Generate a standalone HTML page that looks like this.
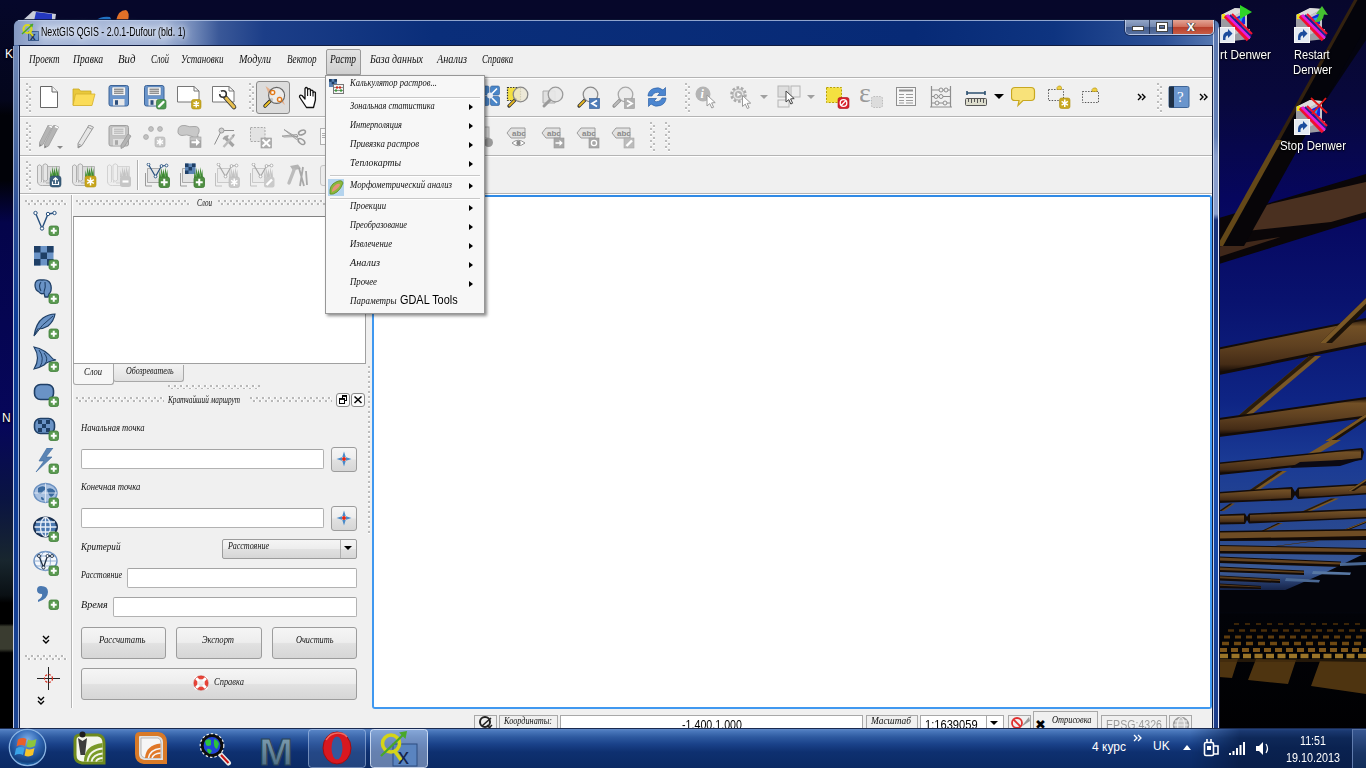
<!DOCTYPE html>
<html lang="ru"><head><meta charset="utf-8"><title>NextGIS QGIS</title>
<style>
html,body{margin:0;padding:0}
body{width:1366px;height:768px;overflow:hidden;position:relative;background:#05072a;font-family:"Liberation Sans",sans-serif;font-size:12px;color:#000}
.a{position:absolute}
.hw{font-family:"Liberation Serif",serif;font-style:italic;font-size:11px;color:#111;white-space:nowrap;position:absolute;line-height:14px}
.nar{font-family:"Liberation Sans",sans-serif;white-space:nowrap;position:absolute;transform-origin:0 50%}
.sep{position:absolute;left:20px;width:1192px;height:1px;background:#b4b4b4;border-bottom:1px solid #fff}
.grip{position:absolute;width:6px;background:linear-gradient(#bcbcbc 0,#bcbcbc 1.6px,#fff 1.6px,#fff 2.8px,transparent 2.8px) 0 0/2px 6px repeat-y,linear-gradient(#bcbcbc 0,#bcbcbc 1.6px,#fff 1.6px,#fff 2.8px,transparent 2.8px) 3px 3px/2px 6px repeat-y}
.gripx{position:absolute;height:6px;background:linear-gradient(90deg,#b8b8b8 0,#b8b8b8 1.6px,#fff 1.6px,#fff 2.8px,transparent 2.8px) 0 0/6px 2px repeat-x,linear-gradient(90deg,#b8b8b8 0,#b8b8b8 1.6px,#fff 1.6px,#fff 2.8px,transparent 2.8px) 3px 3px/6px 2px repeat-x}
.inp{position:absolute;background:#fff;border:1px solid #b2b2b2;border-top-color:#a4a4a4;border-radius:2px;box-sizing:border-box}
.btn{position:absolute;box-sizing:border-box;border:1px solid #9c9c9c;border-radius:3px;background:linear-gradient(#f5f5f5 0%,#ededed 48%,#e1e1e1 52%,#d6d6d6 100%)}
.sb{position:absolute;box-sizing:border-box;border:1px solid #a8a8a8;top:715px;height:16px;background:#f0f0f0}
.ic{position:absolute;width:24px;height:24px;overflow:visible}
.mi{position:absolute;left:350px}
.arr{position:absolute;left:469px;width:0;height:0;border-left:4px solid #000;border-top:3.5px solid transparent;border-bottom:3.5px solid transparent}
.msep{position:absolute;left:330px;width:150px;height:1px;background:#c8c8c8;border-bottom:1px solid #fff}
.dt{position:absolute;color:#fff;font-size:13px;text-align:center;text-shadow:0 1px 2px #000,0 0 2px #000;white-space:nowrap}
</style></head><body>

<svg class="a" style="left:0;top:0" width="1366" height="768" viewBox="0 0 1366 768"><defs><linearGradient id="sky" x1="0" y1="0" x2="0" y2="1"><stop offset="0" stop-color="#07072c"/><stop offset=".13" stop-color="#08083c"/><stop offset=".26" stop-color="#06065e"/><stop offset=".39" stop-color="#09126e"/><stop offset=".52" stop-color="#0e2484"/><stop offset=".6" stop-color="#1a3a94"/><stop offset=".7" stop-color="#2a4a90"/><stop offset=".745" stop-color="#3c5c98"/><stop offset=".775" stop-color="#0a1230"/><stop offset=".8" stop-color="#020308"/><stop offset="1" stop-color="#000"/></linearGradient><linearGradient id="lft" x1="0" y1="0" x2="0" y2="1"><stop offset="0" stop-color="#05072a"/><stop offset=".13" stop-color="#04061c"/><stop offset=".15" stop-color="#010208"/><stop offset=".235" stop-color="#010208"/><stop offset=".29" stop-color="#04044a"/><stop offset=".55" stop-color="#06065a"/><stop offset=".65" stop-color="#0a1442"/><stop offset=".73" stop-color="#18262e"/><stop offset=".775" stop-color="#0a1014"/><stop offset=".785" stop-color="#000"/><stop offset=".812" stop-color="#000"/><stop offset=".816" stop-color="#3a3c30"/><stop offset=".845" stop-color="#3a3c30"/><stop offset=".85" stop-color="#000"/><stop offset="1" stop-color="#000"/></linearGradient><linearGradient id="bm" x1="0" y1="0" x2="0" y2="1"><stop offset="0" stop-color="#2a1a0c"/><stop offset=".12" stop-color="#725026"/><stop offset=".5" stop-color="#5e4020"/><stop offset=".85" stop-color="#452c16"/><stop offset="1" stop-color="#160c06"/></linearGradient><linearGradient id="shd" x1="0" y1="0" x2="1" y2="1"><stop offset="0" stop-color="#02030a" stop-opacity="0"/><stop offset=".45" stop-color="#02030a" stop-opacity="0"/><stop offset=".62" stop-color="#02030a" stop-opacity=".95"/><stop offset="1" stop-color="#000"/></linearGradient></defs><rect x="0" y="0" width="20" height="768" fill="url(#lft)"/><rect x="20" y="0" width="1200" height="22" fill="#06072a"/><rect x="1210" y="0" width="156" height="768" fill="url(#sky)"/><path d="M1366 0 L1364 0 L1288 130 L1306 130 L1366 40z" fill="#04040e"/><path d="M1357 0 L1381 0 L1303 140 L1279 140z" fill="#04040b"/><path d="M1354 0 L1357.5 0 L1280 140 L1276 140z" fill="#33220f"/><path d="M1219 218 L1366 174 L1366 218 L1219 264z" fill="#0a0608"/><path d="M1237.5 232 L1253 208 L1366 182 L1366 212 L1331 222z" fill="#4a3020"/><path d="M1219 246.5 L1280.5 237 L1219 257z" fill="#40281a"/><path d="M1281 140 L1303 140 L1244 246 L1222 246z" fill="#070508"/><path d="M1276 140 L1282 140 L1223 246 L1217 246z" fill="#644818"/><path d="M1219 347.5 L1366 318 L1366 345 L1219 375z" fill="#140c08"/><path d="M1219 349.5 L1366 320 L1366 342 L1219 372z" fill="url(#bm)"/><path d="M1366 298 L1378 298 L1332 343 L1320 343z" fill="#1c1208"/><path d="M1366 298 L1372 298 L1326 343 L1320 343z" fill="#7a5826"/><path d="M1309 356 L1321 356 L1237 427 L1225 427z" fill="#7a5826"/><path d="M1309 356 L1315 356 L1231 427 L1225 427z" fill="#2a1c0c"/><path d="M1219 418 L1366 397 L1366 418 L1219 437z" fill="#140c08"/><path d="M1219 420 L1366 399 L1366 415.5 L1219 434.5z" fill="url(#bm)"/><path d="M1366 414 L1376 414 L1335 441 L1325 441z" fill="#1c1208"/><path d="M1366 414 L1371 414 L1330 441 L1325 441z" fill="#7a5826"/><path d="M1331 440 L1341 440 L1304 462 L1294 462z" fill="#7a5826"/><path d="M1219 462.5 L1362 448 L1364 452 L1362 460 L1219 475z" fill="#140c08"/><path d="M1219 464 L1361 449.5 L1361 458 L1219 473z" fill="url(#bm)"/><path d="M1300 462 L1362 459 L1340 466 L1290 468z" fill="#0c0a14"/><path d="M1278 471 L1287 471 L1247 498 L1238 498z" fill="#7a5826"/><path d="M1278 471 L1282.5 471 L1242.5 498 L1238 498z" fill="#2a1c0c"/><path d="M1219 492 L1292 487 L1295 492 L1298 487.5 L1366 483.5 L1366 494.5 L1298 499 L1295 495 L1292 500 L1219 503z" fill="#140c08"/><path d="M1219 493.5 L1291 488.5 L1291 498 L1219 501.5z" fill="url(#bm)"/><path d="M1299 489 L1366 485 L1366 493 L1299 497.5z" fill="url(#bm)"/><path d="M1366 479 L1372 479 L1354 491 L1348 491z" fill="#1c1208"/><path d="M1366 479 L1369 479 L1351 491 L1348 491z" fill="#7a5826"/><path d="M1331 498.5 L1339 498.5 L1298 517 L1290 517z" fill="#7a5826"/><path d="M1331 498.5 L1335 498.5 L1294 517 L1290 517z" fill="#2a1c0c"/><path d="M1230 503.5 L1235 503.5 L1224 511 L1219 511z" fill="#6a4a22"/><path d="M1230 503.5 L1232.5 503.5 L1221.5 511 L1219 511z" fill="#1c1208"/><path d="M1219 514.5 L1245 513.5 L1247 517 L1249 513.5 L1366 508.5 L1366 518.5 L1249 523.5 L1247 520 L1245 524 L1219 524.5z" fill="#140c08"/><path d="M1219 516 L1244 515 L1244 522.5 L1219 523z" fill="url(#bm)"/><path d="M1250 515 L1366 510 L1366 517 L1250 522z" fill="url(#bm)"/><path d="M1278 523 L1283 523 L1256 536 L1251 536z" fill="#6a4a22"/><path d="M1278 523 L1280.5 523 L1253.5 536 L1251 536z" fill="#1c1208"/><path d="M1366 521 L1371 521 L1336 535 L1331 535z" fill="#1c1208"/><path d="M1366 521 L1368.5 521 L1333.5 535 L1331 535z" fill="#7a5826"/><path d="M1219 531 L1366 529 L1366 540 L1219 541z" fill="#120a06"/><path d="M1219 532.5 L1366 530.5 L1366 536 L1219 538.5z" fill="#6e4c24"/><path d="M1317 540.5 L1321 540.5 L1226 553 L1222 553z" fill="#5e4220"/><path d="M1317 540.5 L1319 540.5 L1224 553 L1222 553z" fill="#1c1208"/><path d="M1219 545 L1366 548 L1366 555 L1219 553.5z" fill="#120a06"/><path d="M1219 546 L1366 549 L1366 552 L1219 551z" fill="#6a4822"/><path d="M1219 556.5 L1341 561.5 L1341 567 L1219 563z" fill="#120a06"/><path d="M1219 557.5 L1341 562.5 L1341 564.5 L1219 560.5z" fill="#644420"/><path d="M1219 566.5 L1304 570.5 L1304 575 L1219 572z" fill="#120a06"/><path d="M1219 567.5 L1304 571.5 L1304 573 L1219 570z" fill="#5e401e"/><path d="M1219 575.5 L1280 579 L1280 583 L1219 580.5z" fill="#120a06"/><path d="M1219 576.3 L1280 579.8 L1280 581 L1219 578.3z" fill="#583c1c"/><path d="M1219 583.5 L1261 586 L1261 589 L1219 588z" fill="#120a06"/><path d="M1219 584.2 L1261 586.7 L1261 587.6 L1219 585.8z" fill="#50361a"/><path d="M1366 553 L1366 600 L1262 600 L1290 588 L1320 575z" fill="#04050c"/><path d="M1219 590 L1366 590 L1366 612 L1219 612z" fill="#03040a"/><path d="M1313 571 L1351 572.5 L1350 575 L1312 574z" fill="#5878a4"/><path d="M1286 578 L1320 580 L1319 582.5 L1285 581z" fill="#4a6894"/><path d="M1340 563 L1366 562 L1366 565 L1340 566z" fill="#4a6894"/><path d="M1234 624 H1366" stroke="#3a2408" stroke-width="2" stroke-dasharray="5 6"/><path d="M1228 630.5 H1366" stroke="#4a2e0a" stroke-width="2.5" stroke-dasharray="6 5"/><path d="M1224 637 H1366" stroke="#5e3c0e" stroke-width="3" stroke-dasharray="6 5"/><path d="M1222 643.5 H1366" stroke="#6e4812" stroke-width="3.5" stroke-dasharray="7 5"/><path d="M1220 650 H1366" stroke="#7e561a" stroke-width="4" stroke-dasharray="7 4"/><path d="M1220 656 H1366" stroke="#9a7428" stroke-width="4.5" stroke-dasharray="8 3.5"/><path d="M1219 659 L1238 659 L1232 678 L1219 677z M1256 659 L1296 660 L1288 684 L1248 680z M1320 661 L1366 662 L1366 694 L1311 686z" fill="#4e3410"/><path d="M1219 659 H1366 V662 H1219z" fill="#3a260c" opacity=".6"/><path d="M22 21 L33 11 L56 14 L55 21z" fill="#c8ccd8"/><path d="M36 12 L52 14 L52 21 L34 21z" fill="#2438c0"/><path d="M96 21 Q100 16 110 17 L112 21z" fill="#2070c0"/><path d="M116 21 Q118 10 126 10 Q130 12 128 21z" fill="#e07028"/></svg>
<div class="nar" style="left:1220px;top:48px;font-size:12.5px;line-height:14.5px;color:#fff;transform:scaleX(0.941);text-shadow:0 1px 2px #000,0 0 2px #000">rt Denwer</div>
<div class="nar" style="left:1294.4px;top:48px;font-size:12.5px;line-height:14.5px;color:#fff;transform:scaleX(0.886);text-shadow:0 1px 2px #000,0 0 2px #000">Restart</div>
<div class="nar" style="left:1292.5px;top:63px;font-size:12.5px;line-height:14.5px;color:#fff;transform:scaleX(0.905);text-shadow:0 1px 2px #000,0 0 2px #000">Denwer</div>
<div class="nar" style="left:1279.5px;top:139px;font-size:12.5px;line-height:14.5px;color:#fff;transform:scaleX(0.913);text-shadow:0 1px 2px #000,0 0 2px #000">Stop Denwer</div>
<div class="dt" style="left:5px;top:47px;font-size:12px">K</div>
<div class="dt" style="left:2px;top:411px;font-size:12px">N</div>
<svg class="a" style="left:1219px;top:5px" width="38" height="40" viewBox="0 0 38 40"><path d="M2 10 L16 3 L28 4 L28 24 L31 24 L31 34 L14 36 L2 30z" fill="#9c9ca2"/><path d="M2 10 L16 3 L28 4 L15 11z" fill="#dcdcdc"/><path d="M15 11 L28 4 V24 L15 30z" fill="#c4c4c8"/><path d="M16 13 L26 8 V19 L16 24z" fill="#1428e0"/><path d="M18 14 l6 -2 l-2 6z" fill="#20a0f0"/><path d="M3 9 h3 v5 h-3z" fill="#f0e020"/><path d="M6 11 L29 35" stroke="#f01030" stroke-width="3.500"/><path d="M8 10 L31 33" stroke="#e020e0" stroke-width="3"/><path d="M11 10 L32 31" stroke="#1c1c90" stroke-width="1.800"/><path d="M13 9 L33 29" stroke="#f01030" stroke-width="2.200"/><rect x="0.500" y="22.500" width="15" height="15" fill="#e4eaf2" stroke="#f8f8f8" stroke-width="1"/><path d="M4 35 Q3 27 9 26.500 V24 L13.500 28.500 L9 33 V30.500 Q6 30.500 6.500 35z" fill="#1c4c9c"/><path d="M21 0 L33 7 L21 14z" fill="#30d428"/></svg>
<svg class="a" style="left:1294px;top:5px" width="38" height="40" viewBox="0 0 38 40"><path d="M2 10 L16 3 L28 4 L28 24 L31 24 L31 34 L14 36 L2 30z" fill="#9c9ca2"/><path d="M2 10 L16 3 L28 4 L15 11z" fill="#dcdcdc"/><path d="M15 11 L28 4 V24 L15 30z" fill="#c4c4c8"/><path d="M16 13 L26 8 V19 L16 24z" fill="#1428e0"/><path d="M18 14 l6 -2 l-2 6z" fill="#20a0f0"/><path d="M3 9 h3 v5 h-3z" fill="#f0e020"/><path d="M6 11 L29 35" stroke="#f01030" stroke-width="3.500"/><path d="M8 10 L31 33" stroke="#e020e0" stroke-width="3"/><path d="M11 10 L32 31" stroke="#1c1c90" stroke-width="1.800"/><path d="M13 9 L33 29" stroke="#f01030" stroke-width="2.200"/><rect x="0.500" y="22.500" width="15" height="15" fill="#e4eaf2" stroke="#f8f8f8" stroke-width="1"/><path d="M4 35 Q3 27 9 26.500 V24 L13.500 28.500 L9 33 V30.500 Q6 30.500 6.500 35z" fill="#1c4c9c"/><path d="M20 17 Q24 14 25 9 L22 9 L28 1 L34 10 L30 9.500 Q29 18 20 17z" fill="#44c030"/></svg>
<svg class="a" style="left:1294px;top:97px" width="38" height="40" viewBox="0 0 38 40"><path d="M2 10 L16 3 L28 4 L28 24 L31 24 L31 34 L14 36 L2 30z" fill="#9c9ca2"/><path d="M2 10 L16 3 L28 4 L15 11z" fill="#dcdcdc"/><path d="M15 11 L28 4 V24 L15 30z" fill="#c4c4c8"/><path d="M16 13 L26 8 V19 L16 24z" fill="#1428e0"/><path d="M18 14 l6 -2 l-2 6z" fill="#20a0f0"/><path d="M3 9 h3 v5 h-3z" fill="#f0e020"/><path d="M6 11 L29 35" stroke="#f01030" stroke-width="3.500"/><path d="M8 10 L31 33" stroke="#e020e0" stroke-width="3"/><path d="M11 10 L32 31" stroke="#1c1c90" stroke-width="1.800"/><path d="M13 9 L33 29" stroke="#f01030" stroke-width="2.200"/><rect x="0.500" y="22.500" width="15" height="15" fill="#e4eaf2" stroke="#f8f8f8" stroke-width="1"/><path d="M4 35 Q3 27 9 26.500 V24 L13.500 28.500 L9 33 V30.500 Q6 30.500 6.500 35z" fill="#1c4c9c"/><path d="M17 1 L33 16 M32 1 L18 17" stroke="#e01818" stroke-width="1.800"/></svg>
<div class="a" id="win" style="left:14px;top:20px;width:1205px;height:720px;border-radius:7px 7px 0 0;background:linear-gradient(90deg,#4f6da6 0,#4f6da6 4px,#1a3a80 5px,#0a2e7a 40%,#072a76 100%);box-shadow:0 0 0 1px rgba(10,20,50,.8)"></div>
<div class="a" style="left:14px;top:20px;width:1205px;height:25px;border-radius:6px 6px 0 0;background:linear-gradient(90deg,#8498c2 0px,#a9b9d9 30px,#a3b4d6 150px,#7088b8 180px,#3a5898 205px,#1c3e88 250px,#0a2e7a 420px,#072a76 900px,#0e3480 1040px,#2c5096 1150px,#5a7cb4 1205px)"></div>
<div class="a" style="left:18px;top:20px;width:1196px;height:1px;background:rgba(190,205,235,.75)"></div>
<div class="a" style="left:13px;top:46px;width:1px;height:682px;background:linear-gradient(#8ea0c4 0,#b8c4e0 250px,#c8d0e8 682px)"></div>
<div class="a" style="left:14px;top:46px;width:4px;height:682px;background:linear-gradient(#6f88b8 0,#5572a4 70px,#2a4c96 170px,#0c3c98 280px,#103c94 500px,#1c4490 682px)"></div>
<div class="a" style="left:18px;top:46px;width:1px;height:682px;background:#9db0d6"></div>
<div class="a" style="left:19px;top:45px;width:1194px;height:700px;background:#101c40"></div>
<div class="a" style="left:1212px;top:46px;width:8px;height:682px;background:linear-gradient(90deg,#101c3c 0,#101c3c 1px,#c8d4ec 1px,#c8d4ec 2px,rgba(0,0,0,0) 2px,rgba(0,0,0,0) 6px,#e4e9f6 6px,#e4e9f6 7px,#0a1030 7px),linear-gradient(#5c78b0 0,#6480b6 90px,#8a9ecb 110px,#8a9ecb 168px,#16307a 174px,#123484 260px,#1448a8 380px,#1448a8 500px,#1c3c88 682px)"></div>
<div class="a" style="left:1213px;top:24px;width:6px;height:22px;border-radius:0 6px 0 0;background:linear-gradient(90deg,#c8d4ec 0,#c8d4ec 1px,#5c78b0 1px,#5c78b0 5px,#e4e9f6 5px)"></div>
<svg class="a" style="left:21px;top:22px" width="20" height="20" viewBox="0 0 20 20"><rect x="7.500" y="9.500" width="10" height="9" fill="#6d93c6" stroke="#3a5a8c"/><text x="9" y="17.500" font-family="Liberation Sans,sans-serif" font-weight="bold" font-size="10" fill="#1a2a4a">x</text><circle cx="6.500" cy="7" r="4" fill="none" stroke="#d8d820" stroke-width="2.200"/><path d="M8 9 L12 14" stroke="#d8d820" stroke-width="2"/><path d="M1 12 L12 2" stroke="#48a828" stroke-width="1.400"/><path d="M12 2 l-3.500 .5 l3 3z" fill="#48a828"/></svg>
<div class="nar" style="left:41px;top:24px;font-size:13px;line-height:15px;color:#000;transform:scaleX(0.678);text-shadow:0 0 6px #fff,0 0 10px #fff,0 0 14px #dfe8ff">NextGIS QGIS - 2.0.1-Dufour (bld. 1)</div>
<div class="a" style="left:1125px;top:20px;width:89px;height:15px;border:1px solid rgba(230,238,255,.75);border-top:none;border-radius:0 0 5px 5px;box-sizing:border-box;overflow:hidden;box-shadow:0 0 0 1px rgba(20,30,60,.6)"><div class="a" style="left:0;top:0;width:23px;height:15px;background:linear-gradient(#93a5c6 0,#7388b0 45%,#475f8e 50%,#5a73a3 100%);border-right:1px solid rgba(20,30,60,.7)"></div><div class="a" style="left:24px;top:0;width:22px;height:15px;background:linear-gradient(#93a5c6 0,#7388b0 45%,#475f8e 50%,#5a73a3 100%);border-right:1px solid rgba(20,30,60,.7)"></div><div class="a" style="left:47px;top:0;width:42px;height:15px;background:linear-gradient(#e3a596 0,#d0705c 45%,#b8402c 50%,#c86048 100%)"></div><div class="a" style="left:7px;top:7px;width:10px;height:3px;background:#fff;box-shadow:0 0 0 1px #444"></div><div class="a" style="left:31px;top:3px;width:6px;height:4px;border:2px solid #fff;box-shadow:0 0 0 1px #444, inset 0 0 0 1px #444"></div><div class="a" style="left:61px;top:-1px;width:14px;font:bold 14px/15px 'Liberation Sans',sans-serif;color:#fff;text-shadow:0 0 1px #333,1px 0 0 #555,-1px 0 0 #555">x</div></div>
<div class="a" id="client" style="left:20px;top:46px;width:1192px;height:690px;background:#f0f0f0"></div>
<div class="a" style="left:326px;top:49px;width:35px;height:26px;box-sizing:border-box;border:1px solid #9a9a9a;border-radius:2px 2px 0 0;background:linear-gradient(#e4e4e4,#cfcfcf)"></div>
<div class="hw" style="left:29px;top:52px;font-size:12px;color:#111;transform-origin:0 50%;transform:scaleX(0.760);">Проект</div>
<div class="hw" style="left:73px;top:52px;font-size:12px;color:#111;transform-origin:0 50%;transform:scaleX(0.807);">Правка</div>
<div class="hw" style="left:118px;top:52px;font-size:12px;color:#111;transform-origin:0 50%;transform:scaleX(0.902);">Вид</div>
<div class="hw" style="left:150.5px;top:52px;font-size:12px;color:#111;transform-origin:0 50%;transform:scaleX(0.709);">Слой</div>
<div class="hw" style="left:181px;top:52px;font-size:12px;color:#111;transform-origin:0 50%;transform:scaleX(0.753);">Установки</div>
<div class="hw" style="left:238.5px;top:52px;font-size:12px;color:#111;transform-origin:0 50%;transform:scaleX(0.846);">Модули</div>
<div class="hw" style="left:286.5px;top:52px;font-size:12px;color:#111;transform-origin:0 50%;transform:scaleX(0.761);">Вектор</div>
<div class="hw" style="left:329.5px;top:52px;font-size:12px;color:#111;transform-origin:0 50%;transform:scaleX(0.791);">Растр</div>
<div class="hw" style="left:370px;top:52px;font-size:12px;color:#111;transform-origin:0 50%;transform:scaleX(0.826);">База данных</div>
<div class="hw" style="left:437px;top:52px;font-size:12px;color:#111;transform-origin:0 50%;transform:scaleX(0.852);">Анализ</div>
<div class="hw" style="left:482px;top:52px;font-size:12px;color:#111;transform-origin:0 50%;transform:scaleX(0.729);">Справка</div>
<div class="sep" style="top:77px"></div>
<div class="sep" style="top:116px"></div>
<div class="sep" style="top:155px"></div>
<div class="sep" style="top:193px"></div>
<div class="grip" style="left:26px;top:83px;height:30px"></div>
<div class="grip" style="left:249px;top:83px;height:30px"></div>
<div class="grip" style="left:685px;top:83px;height:30px"></div>
<div class="grip" style="left:1157px;top:83px;height:30px"></div>
<div class="grip" style="left:26px;top:122px;height:30px"></div>
<div class="grip" style="left:650px;top:122px;height:30px"></div>
<div class="grip" style="left:665px;top:122px;height:30px"></div>
<div class="grip" style="left:26px;top:161px;height:30px"></div>
<div class="a" style="left:256px;top:81px;width:34px;height:33px;box-sizing:border-box;border:1px solid #8a8a8a;border-radius:3px;background:#dcdcdc"></div>
<svg class="a" style="left:37px;top:85px" width="26" height="26" viewBox="0 0 26 26"><path d="M3.5 1.5 H15 L20.5 7 V22.5 H3.5z" fill="#fff" stroke="#666" stroke-width="1"/><path d="M15 1.5 V7 H20.5" fill="#f4f4f4" stroke="#666" stroke-width="1"/></svg>
<svg class="a" style="left:72px;top:85px" width="26" height="26" viewBox="0 0 26 26"><path d="M1 4 H7 L8.5 6 H19 V20 H1z" fill="#e9c83c" stroke="#c9a822" stroke-width=".8"/><path d="M3.5 9 H23 L20 20.5 H1z" fill="#fbdc58" stroke="#d4b02c" stroke-width=".8"/></svg>
<svg class="a" style="left:107px;top:85px" width="26" height="26" viewBox="0 0 26 26"><rect x="2" y="0.5" width="19.5" height="20.5" rx="2" fill="#6a95cc" stroke="#3e6496" stroke-width="1"/><rect x="5" y="2" width="13.5" height="8.5" rx="1" fill="#f4f4f4" stroke="#3e6496" stroke-width=".4"/><path d="M7 4.2 h9.5 M7 6.2 h9.5 M7 8.2 h9.5" stroke="#555" stroke-width=".9"/><rect x="6" y="14" width="11.5" height="6.5" fill="#e8e8e8"/><rect x="8" y="15.2" width="3" height="4.6" fill="#2d4f7c"/></svg>
<svg class="a" style="left:142px;top:85px" width="26" height="26" viewBox="0 0 26 26"><g transform="translate(.5 0)"><rect x="2" y="0.5" width="19.5" height="20.5" rx="2" fill="#6a95cc" stroke="#3e6496" stroke-width="1"/><rect x="5" y="2" width="13.5" height="8.5" rx="1" fill="#f4f4f4" stroke="#3e6496" stroke-width=".4"/><path d="M7 4.2 h9.5 M7 6.2 h9.5 M7 8.2 h9.5" stroke="#555" stroke-width=".9"/><rect x="6" y="14" width="11.5" height="6.5" fill="#e8e8e8"/><rect x="8" y="15.2" width="3" height="4.6" fill="#2d4f7c"/></g><rect x="14.5" y="14.5" width="9.5" height="9.5" rx="2" fill="#4e9a50" stroke="#3a7a3c" stroke-width=".7"/><path d="M17 21.5 L21.5 17" stroke="#fff" stroke-width="2.4" stroke-linecap="round"/></svg>
<svg class="a" style="left:177px;top:85px" width="26" height="26" viewBox="0 0 26 26"><path d="M0.5 1.5 H17 L22 6 V17 H0.5z" fill="#fff" stroke="#777" stroke-width="1"/><path d="M17 1.5 V6 H22" fill="none" stroke="#777" stroke-width="1"/><rect x="14.5" y="14.5" width="9.5" height="9.5" rx="2" fill="#c8a820" stroke="#b09010" stroke-width=".6"/><path d="M19.25 16.1 v6.3 M16.5095 17.675 l5.481 3.15 M16.5095 20.825 l5.481 -3.15" stroke="#fff" stroke-width="1.5"/></svg>
<svg class="a" style="left:212px;top:85px" width="26" height="26" viewBox="0 0 26 26"><path d="M0.5 1.5 H17 L22 6 V17 H0.5z" fill="#fff" stroke="#777" stroke-width="1"/><path d="M17 1.5 V6 H22" fill="none" stroke="#777" stroke-width="1"/><path d="M13 12 L22 22" stroke="#333" stroke-width="4.6" stroke-linecap="round"/><path d="M14 13 L22 22" stroke="#e8c050" stroke-width="3" stroke-linecap="round"/><circle cx="11" cy="9" r="3.3" fill="#fff" stroke="#333" stroke-width="1.6"/><path d="M8 5 L11 9 L6.5 9z" fill="#fff"/></svg>
<svg class="a" style="left:261px;top:85px" width="26" height="26" viewBox="0 0 26 26"><path d="M4.5 1 L14 8 L9 12z" fill="#e8a070" opacity=".75"/><path d="M24 20 L15 13 L19.5 9.5z" fill="#e8a070" opacity=".75"/><path d="M10.5 14.5 L4 21" stroke="#222" stroke-width="3.4" stroke-linecap="round"/><path d="M8.6 16.6 L4.2 21" stroke="#f0c428" stroke-width="2" stroke-linecap="round"/><circle cx="15.6" cy="10.4" r="8" fill="rgba(240,240,240,.8)" stroke="#666" stroke-width="1.1"/><circle cx="11.6" cy="7.5" r="2.8" fill="#e07818"/><rect x="10.4" y="6.3" width="2.4" height="2.4" fill="#fff"/><circle cx="18.6" cy="14.5" r="2.8" fill="#e07818"/><rect x="17.4" y="13.3" width="2.4" height="2.4" fill="#fff"/></svg>
<svg class="a" style="left:296px;top:85px" width="26" height="26" viewBox="0 0 26 26"><path d="M9 12 V3.5 q1.3 -2 2.6 0 V4.5 q1.4 -1.8 2.8 0 V6 q1.3 -1.6 2.6 0 V7.5 q1.2 -1.4 2.4 0 V15 L17.5 22.5 H10.5 L3.5 12 q0 -2.5 2.5 -1.5 L9 14z" fill="#fff" stroke="#111" stroke-width="1.3" stroke-linejoin="round"/><path d="M11.6 4.5 V11 M14.4 6 V11 M17 7.5 V11.5" stroke="#111" stroke-width="1.1"/></svg>
<svg class="a" style="left:478px;top:85px" width="26" height="26" viewBox="0 0 26 26"><g fill="#4a86c8" stroke="#2d5a96" stroke-width=".6"><rect x="2" y="1" width="9" height="9" rx="1.500"/><rect x="12.500" y="1" width="9" height="9" rx="1.500"/><rect x="2" y="11.500" width="9" height="9" rx="1.500"/><rect x="12.500" y="11.500" width="9" height="9" rx="1.500"/></g><path d="M14 8.500 l5 -5 M14 13 l5 5" stroke="#fff" stroke-width="1.600"/><circle cx="12" cy="10.500" r="3" fill="#e8eef8"/></svg>
<svg class="a" style="left:506px;top:85px" width="26" height="26" viewBox="0 0 26 26"><rect x="1.5" y="2.5" width="13" height="13" fill="#f4e040" stroke="#333" stroke-dasharray="1.5 1.2" stroke-width="1.2"/><path d="M9.5 14.5 L3 21" stroke="#333" stroke-width="3.2" stroke-linecap="round"/><path d="M8 16 L3.4 20.6" stroke="#e8b820" stroke-width="1.8" stroke-linecap="round"/><circle cx="14.5" cy="9.5" r="7.3" fill="rgba(236,232,212,.85)" stroke="#888" stroke-width="1.3"/></svg>
<svg class="a" style="left:541px;top:85px" width="26" height="26" viewBox="0 0 26 26"><path d="M2 6 h12 v12 h-12z" fill="#e0e0e0" stroke="#aaa"/><path d="M9.5 14.5 L3 21" stroke="#9a9a9a" stroke-width="3" stroke-linecap="round"/><circle cx="14.5" cy="9.5" r="7.3" fill="rgba(232,232,232,.9)" stroke="#9a9a9a" stroke-width="1.3"/></svg>
<svg class="a" style="left:576px;top:85px" width="26" height="26" viewBox="0 0 26 26"><path d="M9.5 14.5 L3 21" stroke="#333" stroke-width="3.2" stroke-linecap="round"/><path d="M8 16 L3.4 20.6" stroke="#e8b820" stroke-width="1.8" stroke-linecap="round"/><circle cx="14.5" cy="9.5" r="7.3" fill="#ececec" stroke="#8c8c8c" stroke-width="1.3"/><rect x="13.5" y="13.5" width="10" height="10" fill="#4e7cb8" stroke="#2c5690" stroke-width=".6"/><path d="M21 15.5 L16 18.5 L21 21.5" fill="none" stroke="#fff" stroke-width="1.8"/></svg>
<svg class="a" style="left:611px;top:85px" width="26" height="26" viewBox="0 0 26 26"><path d="M9.5 14.5 L3 21" stroke="#8c8c8c" stroke-width="3.2" stroke-linecap="round"/><path d="M8 16 L3.4 20.6" stroke="#bdbdbd" stroke-width="1.8" stroke-linecap="round"/><circle cx="14.5" cy="9.5" r="7.3" fill="#ececec" stroke="#a8a8a8" stroke-width="1.3"/><rect x="13.5" y="13.5" width="10" height="10" fill="#b0b0b0" stroke="#999" stroke-width=".6"/><path d="M16 15.5 L21 18.5 L16 21.5" fill="none" stroke="#fff" stroke-width="1.8"/></svg>
<svg class="a" style="left:645px;top:85px" width="26" height="26" viewBox="0 0 26 26"><path d="M3 11 A9 8.5 0 0 1 18 5 L20.5 2.5 V10.5 H12.5 L15 8 A5.5 5 0 0 0 7 11z" fill="#4c86d0" stroke="#2c62a8" stroke-width=".7"/><path d="M21 13 A9 8.5 0 0 1 6 19 L3.5 21.5 V13.5 H11.5 L9 16 A5.5 5 0 0 0 17 13z" fill="#4c86d0" stroke="#2c62a8" stroke-width=".7"/></svg>
<svg class="a" style="left:694px;top:85px" width="26" height="26" viewBox="0 0 26 26"><circle cx="9" cy="9" r="7.5" fill="#b4b4b4"/><text x="6.6" y="13.4" font-family="Liberation Serif,serif" font-style="italic" font-weight="bold" font-size="12" fill="#fff">i</text><path transform="translate(13 10)" d="M0 0 L0 11 L2.8 8.6 L4.8 13 L6.6 12.2 L4.6 7.9 L8.2 7.6z" fill="#fff" stroke="#9a9a9a" stroke-width="1"/></svg>
<svg class="a" style="left:729px;top:85px" width="26" height="26" viewBox="0 0 26 26"><circle cx="9.5" cy="9.5" r="7" fill="none" stroke="#aaa" stroke-width="2.6" stroke-dasharray="2.6 1.8"/><circle cx="9.5" cy="9.5" r="5.6" fill="#e6e6e6" stroke="#aaa" stroke-width="1"/><circle cx="9.5" cy="9.5" r="3.6" fill="#b4b4b4"/><path d="M8.3 7.5 L11.8 9.5 L8.3 11.5z" fill="#fff"/><path transform="translate(13.5 10.5)" d="M0 0 L0 11 L2.8 8.6 L4.8 13 L6.6 12.2 L4.6 7.9 L8.2 7.6z" fill="#fff" stroke="#9a9a9a" stroke-width="1"/></svg>
<svg class="a" style="left:777px;top:85px" width="26" height="26" viewBox="0 0 26 26"><rect x="1" y="1" width="11" height="11" fill="#dedede" stroke="#b4b4b4"/><rect x="14" y="1" width="9" height="11" fill="#ededed" stroke="#b4b4b4"/><rect x="1" y="15" width="11" height="7" fill="#ededed" stroke="#b4b4b4"/><path transform="translate(9 6)" d="M0 0 L0 11 L2.8 8.6 L4.8 13 L6.6 12.2 L4.6 7.9 L8.2 7.6z" fill="#fff" stroke="#444" stroke-width="1"/></svg>
<svg class="a" style="left:825px;top:85px" width="26" height="26" viewBox="0 0 26 26"><rect x="1.5" y="2.5" width="15" height="15" fill="#f4e040" stroke="#b8a000" stroke-dasharray="2 1.4" stroke-width="1"/><rect x="13" y="12.5" width="11" height="11" rx="2" fill="#d8202c" stroke="#a8101c" stroke-width=".6"/><circle cx="18.5" cy="18" r="3.3" fill="none" stroke="#fff" stroke-width="1.3"/><path d="M16.3 20.2 L20.7 15.8" stroke="#fff" stroke-width="1.3"/></svg>
<svg class="a" style="left:860px;top:85px" width="26" height="26" viewBox="0 0 26 26"><text x="-1" y="17" font-family="Liberation Serif,serif" font-size="28" fill="#9a9a9a">ε</text><rect x="11.500" y="11.500" width="11" height="11" rx="2" fill="#dcdcdc" stroke="#bcbcbc" stroke-dasharray="1.6 1.2"/></svg>
<svg class="a" style="left:894px;top:85px" width="26" height="26" viewBox="0 0 26 26"><rect x="2.500" y="2.500" width="19" height="18" fill="#f6f6f6" stroke="#8e8e8e"/><path d="M5 5.500 h14" stroke="#8e8e8e" stroke-width="2"/><path d="M5 9.5 h5 M12 9.500 h7 M5 12.500 h5 M12 12.500 h7 M5 15.500 h5 M12 15.500 h7 M5 18 h5 M12 18 h7" stroke="#9a9a9a" stroke-width="1.2"/></svg>
<svg class="a" style="left:929px;top:85px" width="26" height="26" viewBox="0 0 26 26"><path d="M2.500 1 V22 M21.500 1 V22 M1 22 H23" stroke="#8e8e8e" stroke-width="1.2" fill="none"/><path d="M2.5 5 H21.5 M2.5 11.500 H21.5 M2.5 18 H21.5" stroke="#8e8e8e" stroke-width="1"/><g fill="#f0f0f0" stroke="#8e8e8e" stroke-width="1"><circle cx="12" cy="5" r="2"/><circle cx="17" cy="5" r="2"/><circle cx="7" cy="11.5" r="2"/><circle cx="12" cy="11.5" r="2"/><circle cx="8" cy="18" r="2"/><circle cx="16" cy="18" r="2"/></g></svg>
<svg class="a" style="left:964px;top:85px" width="26" height="26" viewBox="0 0 26 26"><path d="M3 6 V10 M21 6 V10 M3 8 H21" stroke="#2c5070" stroke-width="1.6" fill="none"/><rect x="1.500" y="13.500" width="21" height="7" rx="1" fill="#dcdccc" stroke="#555"/><path d="M4.500 14 v3 M7.500 14 v4 M10.500 14 v3 M13.500 14 v4 M16.500 14 v3 M19.500 14 v4" stroke="#555" stroke-width="1"/></svg>
<svg class="a" style="left:1011px;top:85px" width="26" height="26" viewBox="0 0 26 26"><path d="M4 2.500 H20 Q23.5 2.500 23.5 6 V12 Q23.500 15.500 20 15.500 H12 L7 20.500 L8 15.500 H4 Q0.500 15.500 0.500 12 V6 Q0.500 2.500 4 2.500z" fill="#f8e27a" stroke="#c8a820" stroke-width="1.2"/></svg>
<svg class="a" style="left:1047px;top:85px" width="26" height="26" viewBox="0 0 26 26"><rect x="1.500" y="4.500" width="15" height="11" fill="none" stroke="#555" stroke-dasharray="1.400 1.400"/><path d="M10 4.5 v-2 l1.5 -1.500 h2 l1 1.5 v2z" fill="#f0d040" stroke="#b89818" stroke-width=".7"/><rect x="12.5" y="13" width="10.5" height="10.5" rx="2" fill="#c8a820" stroke="#b09010" stroke-width=".6"/><path d="M17.75 14.6 v7.3 M14.5745 16.425 l6.351 3.65 M14.5745 20.075 l6.351 -3.65" stroke="#fff" stroke-width="1.5"/></svg>
<svg class="a" style="left:1080px;top:85px" width="26" height="26" viewBox="0 0 26 26"><rect x="2.500" y="6.500" width="16" height="11" fill="none" stroke="#555" stroke-dasharray="1.400 1.400"/><path d="M12 6.5 v-2 l1.500 -1.5 h2.500 l1 1.5 v2z" fill="#f0d040" stroke="#b89818" stroke-width=".7"/></svg>
<svg class="a" style="left:1167px;top:85px" width="26" height="26" viewBox="0 0 26 26"><rect x="2" y="1.500" width="20" height="21" rx="1.500" fill="#6a95cc" stroke="#3e6496"/><rect x="2" y="1.500" width="5" height="21" fill="#1f3044"/><text x="10" y="17" font-family="Liberation Serif,serif" font-size="15" fill="#fff">?</text></svg>
<div class="a" style="left:760px;top:95px;width:0;height:0;border-top:4px solid #a0a0a0;border-left:4px solid transparent;border-right:4px solid transparent"></div>
<div class="a" style="left:807px;top:95px;width:0;height:0;border-top:4px solid #a0a0a0;border-left:4px solid transparent;border-right:4px solid transparent"></div>
<div class="a" style="left:994px;top:94px;width:0;height:0;border-top:5px solid #000;border-left:5px solid transparent;border-right:5px solid transparent"></div>
<svg class="a" style="left:1137px;top:93px" width="10" height="8" viewBox="0 0 10 8"><path d="M1 1 L4 4 L1 7 M5 1 L8 4 L5 7" fill="none" stroke="#000" stroke-width="1.400"/></svg>
<svg class="a" style="left:1199px;top:93px" width="10" height="8" viewBox="0 0 10 8"><path d="M1 1 L4 4 L1 7 M5 1 L8 4 L5 7" fill="none" stroke="#000" stroke-width="1.400"/></svg>
<svg class="a" style="left:37px;top:125px" width="26" height="26" viewBox="0 0 26 26"><g fill="#b4b4b4" stroke="#9a9a9a" stroke-width=".8"><path d="M11.500 -0.500 L15.500 1.500 L6 19.500 L2.500 21.500 L2.500 17.500z"/><path d="M17 0 L21.500 2 L11.500 21 L7.500 23 L7.500 19z"/></g><path d="M12.500 1 l2.500 1.300 M18 1.500 l3 1.400" stroke="#fff" stroke-width="1.500"/><path d="M2.700 21.200 l.2 -2 l1.600 1z M7.700 22.700 l.2 -2 l1.600 1z" fill="#777"/></svg>
<svg class="a" style="left:72px;top:125px" width="26" height="26" viewBox="0 0 26 26"><path d="M17 0 L21.500 2.200 L10 20.500 L6 23 L6 18.500z" fill="#e6e6e6" stroke="#9a9a9a" stroke-width="1"/><path d="M15.800 2.200 l4.300 2.200 M6.200 18.800 l3.600 1.800" stroke="#9a9a9a" stroke-width=".9"/><path d="M6.200 22.700 l.2 -2.500 l2 1.200z" fill="#888"/></svg>
<svg class="a" style="left:107px;top:125px" width="26" height="26" viewBox="0 0 26 26"><rect x="2" y="0.5" width="19.5" height="20.5" rx="2" fill="#c4c4c4" stroke="#a0a0a0" stroke-width="1"/><rect x="5" y="2" width="13.5" height="8.5" rx="1" fill="#e8e8e8" stroke="#a0a0a0" stroke-width=".4"/><path d="M7 4.2 h9.5 M7 6.2 h9.5 M7 8.2 h9.5" stroke="#aaa" stroke-width=".9"/><rect x="6" y="14" width="11.5" height="6.5" fill="#e0e0e0"/><rect x="8" y="15.2" width="3" height="4.6" fill="#a8a8a8"/><path d="M21 9 L24 11 L17 22 L14 23.500 L14 20z" fill="#b4b4b4" stroke="#989898" stroke-width=".8"/></svg>
<svg class="a" style="left:142px;top:125px" width="26" height="26" viewBox="0 0 26 26"><g fill="#c2c2c2" stroke="#a4a4a4" stroke-width=".8"><circle cx="9" cy="4" r="2.400"/><circle cx="18" cy="4" r="2.400"/><circle cx="4" cy="12" r="2.400"/></g><rect x="13" y="12" width="10" height="10" rx="2" fill="#c8c8c8" stroke="#b0b0b0" stroke-width=".6"/><path d="M18 13.6 v6.8 M15.042 15.3 l5.916 3.4 M15.042 18.7 l5.916 -3.4" stroke="#fff" stroke-width="1.5"/></svg>
<svg class="a" style="left:177px;top:125px" width="26" height="26" viewBox="0 0 26 26"><path d="M1 6 Q1 0 8 0.500 Q13 2.500 17 1.500 Q23 1 22 7 Q20 10 21 12 Q17 14 14 11 Q10 9 5 10.500 Q0.500 10 1 6z" fill="#c8c8c8" stroke="#a6a6a6" stroke-width="1"/><rect x="13" y="12" width="11" height="10.500" fill="#a8a8a8" stroke="#999" stroke-width=".6"/><rect x="13.300" y="12.300" width="10.400" height="3" fill="#c4c4c4"/><path d="M14.500 16.300 h4.500 v-2.800 l4 3.800 l-4 3.800 v-2.800 h-4.500z" fill="#fff"/></svg>
<svg class="a" style="left:212px;top:125px" width="26" height="26" viewBox="0 0 26 26"><path d="M2.500 19.500 L9.500 5.500 H22" fill="none" stroke="#8e8e8e" stroke-width="1"/><circle cx="9.500" cy="5.500" r="2.500" fill="#cfcfcf" stroke="#9a9a9a"/><path d="M13 12.500 L21.500 21" stroke="#a4a4a4" stroke-width="3.200"/><path d="M10.500 13.500 q2.500 -4 6.500 -3 l-1.500 2.500 l-2 -.5 l-1.500 2.500z" fill="#a4a4a4"/><path d="M21 11.500 L11.500 22" stroke="#bcbcbc" stroke-width="2.400"/><path d="M19.500 10.500 l2.500 -1.500 l1 1 l-1.500 2.500z" fill="#a4a4a4"/></svg>
<svg class="a" style="left:249px;top:125px" width="26" height="26" viewBox="0 0 26 26"><rect x="1.500" y="2.500" width="14.500" height="14" fill="#e2e2e2" stroke="#a8a8a8" stroke-dasharray="2 1.400"/><rect x="12" y="13" width="10.500" height="10" fill="#b0b0b0" stroke="#999" stroke-width=".6"/><path d="M13.500 14.500 l7.500 7 M21 14.500 l-7.500 7" stroke="#fff" stroke-width="2"/></svg>
<svg class="a" style="left:282px;top:125px" width="26" height="26" viewBox="0 0 26 26"><path d="M2 4.500 L16.500 13.500 L14.500 14.500z M0 11 L15 9.500 L16 11.500 L2 12z" fill="#dcdcdc" stroke="#9a9a9a" stroke-width=".9"/><ellipse cx="20" cy="7.500" rx="3.600" ry="2.200" fill="none" stroke="#9a9a9a" stroke-width="1.500" transform="rotate(-22 20 7.500)"/><ellipse cx="19.500" cy="16.500" rx="3.800" ry="2.200" fill="none" stroke="#9a9a9a" stroke-width="1.500" transform="rotate(38 19.500 16.500)"/></svg>
<svg class="a" style="left:475px;top:125px" width="26" height="26" viewBox="0 0 26 26"><rect x="8" y="2" width="6" height="11" fill="#dcdcdc" stroke="#aaa"/><circle cx="13.500" cy="17.500" r="4.500" fill="#999"/></svg>
<svg class="a" style="left:506px;top:125px" width="26" height="26" viewBox="0 0 26 26"><path d="M1 8 L5 3 H19 V13 H5z" fill="#e2e2e2" stroke="#9c9c9c" stroke-width="1"/><text x="6" y="11" font-family="Liberation Sans,sans-serif" font-weight="bold" font-size="8" fill="#8a8a8a">abc</text><path d="M6 18 Q12 12.500 19 18 Q12 23.500 6 18z" fill="#fff" stroke="#8a8a8a" stroke-width=".9"/><circle cx="12.500" cy="18" r="2.200" fill="#8a8a8a"/></svg>
<svg class="a" style="left:541px;top:125px" width="26" height="26" viewBox="0 0 26 26"><path d="M1 8 L5 3 H19 V13 H5z" fill="#e2e2e2" stroke="#9c9c9c" stroke-width="1"/><text x="6" y="11" font-family="Liberation Sans,sans-serif" font-weight="bold" font-size="8" fill="#8a8a8a">abc</text><rect x="13" y="13" width="10" height="10" fill="#a8a8a8" stroke="#969696" stroke-width=".6"/><path d="M14.500 17.200 h4 v-2.200 l3.300 3 l-3.300 3 v-2.200 h-4z" fill="#fff"/></svg>
<svg class="a" style="left:576px;top:125px" width="26" height="26" viewBox="0 0 26 26"><path d="M1 8 L5 3 H19 V13 H5z" fill="#e2e2e2" stroke="#9c9c9c" stroke-width="1"/><text x="6" y="11" font-family="Liberation Sans,sans-serif" font-weight="bold" font-size="8" fill="#8a8a8a">abc</text><rect x="13" y="13" width="10" height="10" fill="#a8a8a8" stroke="#969696" stroke-width=".6"/><circle cx="18" cy="18" r="2.600" fill="none" stroke="#fff" stroke-width="1.300"/></svg>
<svg class="a" style="left:611px;top:125px" width="26" height="26" viewBox="0 0 26 26"><path d="M1 8 L5 3 H19 V13 H5z" fill="#e2e2e2" stroke="#9c9c9c" stroke-width="1"/><text x="6" y="11" font-family="Liberation Sans,sans-serif" font-weight="bold" font-size="8" fill="#8a8a8a">abc</text><rect x="13" y="13" width="10" height="10" fill="#bcbcbc" stroke="#a8a8a8" stroke-width=".6"/><path d="M15.500 21 L21 15.500" stroke="#fff" stroke-width="2.400"/></svg>
<div class="a" style="left:57px;top:146px;width:0;height:0;border-top:3px solid #888;border-left:3px solid transparent;border-right:3px solid transparent"></div>
<div class="a" style="left:320px;top:128px;width:8px;height:17px;box-sizing:border-box;border:1px solid #b0b0b0;background:#fafafa"></div><div class="a" style="left:322px;top:133px;width:4px;height:1px;background:#b0b0b0;box-shadow:0 2px 0 #b0b0b0,0 4px 0 #b0b0b0"></div>
<svg class="a" style="left:37px;top:163px" width="26" height="26" viewBox="0 0 26 26"><path d="M10.500 3.500 H22.500 V20.500 H6z" fill="#dadada" stroke="#a8a8a8" stroke-width=".8"/><path d="M0.500 3 q2 -2.500 4 0 V19 q-2 2.500 -4 0z" fill="#e6e6e6" stroke="#a8a8a8" stroke-width=".9"/><path d="M6 2 q2.200 -2.500 4.500 0 V17 q-2.200 2.500 -4.500 0z" fill="#e6e6e6" stroke="#a8a8a8" stroke-width=".9"/><path d="M0.500 19 q1 4 5 3.500 H15 q2 -1.500 0 -2.500 H9" fill="#e6e6e6" stroke="#a8a8a8" stroke-width=".9"/><path d="M13 14 l.6 -7 l1 5 l.9 -8.500 l1.100 7 l.9 -6 l1 6.500 l1 -8 l1 7 l.8 -5 l.7 9z" fill="#3f8a34"/><path d="M14.5 14 l.8 -6 l.8 6z M18.5 14 l.8 -7 l.8 7z" fill="#6fb060"/><rect x="13" y="13" width="11" height="11" rx="2.500" fill="#3a5f7c" stroke="#2a4a64" stroke-width=".6"/><path d="M15.500 18.500 v3 h6 v-3 M18.500 20.500 v-5.500 M16.300 17 l2.200 -2.200 l2.200 2.200" fill="none" stroke="#fff" stroke-width="1.200"/></svg>
<svg class="a" style="left:72px;top:163px" width="26" height="26" viewBox="0 0 26 26"><path d="M10.500 3.500 H22.500 V20.500 H6z" fill="#dadada" stroke="#a8a8a8" stroke-width=".8"/><path d="M0.500 3 q2 -2.500 4 0 V19 q-2 2.500 -4 0z" fill="#e6e6e6" stroke="#a8a8a8" stroke-width=".9"/><path d="M6 2 q2.200 -2.500 4.500 0 V17 q-2.200 2.500 -4.500 0z" fill="#e6e6e6" stroke="#a8a8a8" stroke-width=".9"/><path d="M0.500 19 q1 4 5 3.500 H15 q2 -1.500 0 -2.500 H9" fill="#e6e6e6" stroke="#a8a8a8" stroke-width=".9"/><path d="M13 14 l.6 -7 l1 5 l.9 -8.500 l1.100 7 l.9 -6 l1 6.500 l1 -8 l1 7 l.8 -5 l.7 9z" fill="#3f8a34"/><path d="M14.5 14 l.8 -6 l.8 6z M18.5 14 l.8 -7 l.8 7z" fill="#6fb060"/><rect x="13" y="13" width="11" height="11" rx="2" fill="#c9a61c" stroke="#b0900c" stroke-width=".6"/><path d="M18.5 14.6 v7.8 M15.107 16.55 l6.786 3.9 M15.107 20.45 l6.786 -3.9" stroke="#fff" stroke-width="1.5"/></svg>
<svg class="a" style="left:107px;top:163px" width="26" height="26" viewBox="0 0 26 26"><path d="M10.500 3.500 H22.500 V20.500 H6z" fill="#e8e8e8" stroke="#cecece" stroke-width=".8"/><path d="M0.500 3 q2 -2.500 4 0 V19 q-2 2.500 -4 0z" fill="#efefef" stroke="#cecece" stroke-width=".9"/><path d="M6 2 q2.200 -2.500 4.500 0 V17 q-2.200 2.500 -4.500 0z" fill="#efefef" stroke="#cecece" stroke-width=".9"/><path d="M0.500 19 q1 4 5 3.500 H15 q2 -1.500 0 -2.500 H9" fill="#efefef" stroke="#cecece" stroke-width=".9"/><path d="M13 14 l.6 -7 l1 5 l.9 -8.500 l1.100 7 l.9 -6 l1 6.500 l1 -8 l1 7 l.8 -5 l.7 9z" fill="#c4c4c4"/><path d="M14.5 14 l.8 -6 l.8 6z M18.5 14 l.8 -7 l.8 7z" fill="#d4d4d4"/><rect x="13" y="13" width="11" height="11" rx="2.500" fill="#c6c6c6"/><path d="M15.500 18.500 h6" stroke="#fff" stroke-width="2.200"/></svg>
<svg class="a" style="left:145px;top:163px" width="26" height="26" viewBox="0 0 26 26"><path d="M0.500 10 V23 H7" fill="none" stroke="#9a9a9a" stroke-width="1"/><path d="M2.500 5.500 H15 V19.500 H2.500z" fill="#e4e4e4" stroke="#9a9a9a" stroke-width=".8"/><path d="M3.500 1.500 L10.500 13.500 L16.500 3 L21.500 2.500" fill="none" stroke="#27507e" stroke-width="1.200"/><g fill="#fff" stroke="#27507e" stroke-width=".9"><circle cx="3.500" cy="1.500" r="1.400"/><circle cx="10.500" cy="13.500" r="1.400"/><circle cx="16.500" cy="3" r="1.400"/><circle cx="21.500" cy="2.500" r="1.400"/></g><path d="M14 15 l.6 -7 l1 5 l.9 -8.500 l1.100 7 l.9 -6 l1 6.500 l1 -8 l1 7 l.8 -5 l.7 9z" fill="#3f8a34"/><path d="M15.5 15 l.8 -6 l.8 6z M19.5 15 l.8 -7 l.8 7z" fill="#6fb060"/><rect x="14" y="14" width="10.5" height="10.5" rx="2" fill="#4f8f42" stroke="#3c7a32" stroke-width=".8"/><path d="M15.8 19.25 h6.9 M19.25 15.8 v6.9" stroke="#fff" stroke-width="2"/></svg>
<svg class="a" style="left:180px;top:163px" width="26" height="26" viewBox="0 0 26 26"><path d="M0.500 10 V23 H7" fill="none" stroke="#9a9a9a"/><path d="M2.500 5.500 H15 V19.500 H2.500z" fill="#e4e4e4" stroke="#9a9a9a" stroke-width=".8"/><rect x="5" y="0.500" width="10.500" height="10.500" fill="#5b84b4"/><path d="M5 0.500 h3.500 v3.500 h-3.500z M12 0.500 h3.500 v3.500 h-3.500z M8.500 4 h3.500 v3.500 h-3.500z M5 7.500 h3.500 v3.500 h-3.500z" fill="#1f3f66"/><path d="M14 15 l.6 -7 l1 5 l.9 -8.500 l1.100 7 l.9 -6 l1 6.500 l1 -8 l1 7 l.8 -5 l.7 9z" fill="#3f8a34"/><path d="M15.5 15 l.8 -6 l.8 6z M19.5 15 l.8 -7 l.8 7z" fill="#6fb060"/><rect x="14" y="14" width="10.5" height="10.5" rx="2" fill="#4f8f42" stroke="#3c7a32" stroke-width=".8"/><path d="M15.8 19.25 h6.9 M19.25 15.8 v6.9" stroke="#fff" stroke-width="2"/></svg>
<svg class="a" style="left:215px;top:163px" width="26" height="26" viewBox="0 0 26 26"><path d="M0.500 10 V23 H7" fill="none" stroke="#c0c0c0" stroke-width="1"/><path d="M2.500 5.500 H15 V19.500 H2.500z" fill="#ececec" stroke="#c0c0c0" stroke-width=".8"/><path d="M3.500 1.500 L10.500 13.500 L16.500 3 L21.500 2.500" fill="none" stroke="#a8a8a8" stroke-width="1.200"/><g fill="#fff" stroke="#a8a8a8" stroke-width=".9"><circle cx="3.500" cy="1.500" r="1.400"/><circle cx="10.500" cy="13.500" r="1.400"/><circle cx="16.500" cy="3" r="1.400"/><circle cx="21.500" cy="2.500" r="1.400"/></g><path d="M14 15 l.6 -7 l1 5 l.9 -8.500 l1.100 7 l.9 -6 l1 6.500 l1 -8 l1 7 l.8 -5 l.7 9z" fill="#c4c4c4"/><path d="M15.5 15 l.8 -6 l.8 6z M19.5 15 l.8 -7 l.8 7z" fill="#d4d4d4"/><rect x="14" y="14" width="10.5" height="10.5" rx="2" fill="#c8c8c8" stroke="#bbb" stroke-width=".6"/><path d="M19.25 15.6 v7.3 M16.0745 17.425 l6.351 3.65 M16.0745 21.075 l6.351 -3.65" stroke="#fff" stroke-width="1.5"/></svg>
<svg class="a" style="left:250px;top:163px" width="26" height="26" viewBox="0 0 26 26"><path d="M0.500 10 V23 H7" fill="none" stroke="#c0c0c0" stroke-width="1"/><path d="M2.500 5.500 H15 V19.500 H2.500z" fill="#ececec" stroke="#c0c0c0" stroke-width=".8"/><path d="M3.500 1.500 L10.500 13.500 L16.500 3 L21.500 2.500" fill="none" stroke="#a8a8a8" stroke-width="1.200"/><g fill="#fff" stroke="#a8a8a8" stroke-width=".9"><circle cx="3.500" cy="1.500" r="1.400"/><circle cx="10.500" cy="13.500" r="1.400"/><circle cx="16.500" cy="3" r="1.400"/><circle cx="21.500" cy="2.500" r="1.400"/></g><path d="M14 15 l.6 -7 l1 5 l.9 -8.500 l1.100 7 l.9 -6 l1 6.500 l1 -8 l1 7 l.8 -5 l.7 9z" fill="#c4c4c4"/><path d="M15.5 15 l.8 -6 l.8 6z M19.5 15 l.8 -7 l.8 7z" fill="#d4d4d4"/><rect x="14" y="14" width="10.500" height="10.500" rx="2" fill="#cacaca"/><path d="M16.500 22 L22 16.500" stroke="#fff" stroke-width="2.400"/></svg>
<svg class="a" style="left:285px;top:163px" width="26" height="26" viewBox="0 0 26 26"><path d="M5 3 l8 -1.500 l3 4 l-8 2z" fill="#b4b4b4"/><path d="M9 7 L4 20" stroke="#bcbcbc" stroke-width="3.400" stroke-linecap="round"/><path d="M14 5 L19 23 M18 4 L15 23 M21 8 L22 22" stroke="#a8a8a8" stroke-width="1.800"/></svg>
<div class="a" style="left:137px;top:160px;width:1px;height:30px;background:#b0b0b0;border-right:1px solid #fff"></div>
<div class="a" style="left:320px;top:165px;width:8px;height:21px;box-sizing:border-box;border:1px solid #c4c4c4;border-radius:3px;background:#ececec"></div>
<div class="a" style="left:71px;top:195px;width:1px;height:513px;background:#b4b4b4;border-right:1px solid #fff"></div>
<div class="gripx" style="left:25px;top:200px;width:42px"></div>
<svg class="a" style="left:33px;top:210px" width="26" height="26" viewBox="0 0 26 26"><path d="M2.500 3 L9 18.500 L15 4 L21.500 3" fill="none" stroke="#27507e" stroke-width="1.400"/><g fill="#fff" stroke="#27507e" stroke-width="1"><circle cx="2.500" cy="3" r="1.700"/><circle cx="9" cy="18.500" r="1.700"/><circle cx="15" cy="4" r="1.700"/><circle cx="21.500" cy="3" r="1.700"/></g><rect x="16" y="16" width="9.5" height="9.5" rx="2" fill="#5a9a50" stroke="#3f7e38" stroke-width=".8"/><path d="M17.8 20.75 h5.9 M20.75 17.8 v5.9" stroke="#fff" stroke-width="2"/></svg>
<svg class="a" style="left:33px;top:244px" width="26" height="26" viewBox="0 0 26 26"><rect x="1" y="2" width="19.500" height="19.500" fill="#6a93c6"/><path d="M1 2 h6.500 v6.500 h-6.500z M14 2 h6.500 v6.500 h-6.500z M7.500 8.500 h6.500 v6.500 h-6.500z M1 15 h6.500 v6.500 h-6.500z M14 15 h6.500 v6.500 h-6.500z" fill="#1f3f66"/><rect x="16" y="16" width="9.5" height="9.5" rx="2" fill="#5a9a50" stroke="#3f7e38" stroke-width=".8"/><path d="M17.8 20.75 h5.9 M20.75 17.8 v5.9" stroke="#fff" stroke-width="2"/></svg>
<svg class="a" style="left:33px;top:278px" width="26" height="26" viewBox="0 0 26 26"><path d="M2 7 Q2 1 9 2 Q17 1 18 8 Q19 13 16 16 L15 19 L12 19 L11 15 Q8 17 6 14 Q2 12 2 7z" fill="#6a93c6" stroke="#1f3f66" stroke-width="1.300"/><path d="M8 4 Q5 8 8 13 M12 4 Q13 9 11 14" fill="none" stroke="#1f3f66" stroke-width="1.100"/><rect x="16" y="16" width="9.5" height="9.5" rx="2" fill="#5a9a50" stroke="#3f7e38" stroke-width=".8"/><path d="M17.8 20.75 h5.9 M20.75 17.8 v5.9" stroke="#fff" stroke-width="2"/></svg>
<svg class="a" style="left:33px;top:313px" width="26" height="26" viewBox="0 0 26 26"><path d="M1 23 Q3 10 10 5 Q16 1 22 1 Q21 8 15 13 Q10 16 5 16z" fill="#6a93c6" stroke="#1f3f66" stroke-width="1.200"/><path d="M2 22 Q8 12 20 3" fill="none" stroke="#1f3f66" stroke-width="1"/><rect x="16" y="16" width="9.5" height="9.5" rx="2" fill="#5a9a50" stroke="#3f7e38" stroke-width=".8"/><path d="M17.8 20.75 h5.9 M20.75 17.8 v5.9" stroke="#fff" stroke-width="2"/></svg>
<svg class="a" style="left:33px;top:346px" width="26" height="26" viewBox="0 0 26 26"><path d="M1 1 Q12 3 20 13 L23 14 Q15 15 11 19 Q6 22 1 23 Q8 12 1 1z" fill="#6a93c6" stroke="#1f3f66" stroke-width="1.200"/><path d="M6 4 Q12 12 7 21 M11 7 Q16 13 12 18" fill="none" stroke="#1f3f66" stroke-width="1"/><rect x="16" y="16" width="9.5" height="9.5" rx="2" fill="#5a9a50" stroke="#3f7e38" stroke-width=".8"/><path d="M17.8 20.75 h5.9 M20.75 17.8 v5.9" stroke="#fff" stroke-width="2"/></svg>
<svg class="a" style="left:33px;top:381px" width="26" height="26" viewBox="0 0 26 26"><rect x="1.500" y="3.500" width="19" height="15" rx="6" fill="#6a93c6" stroke="#1f3f66" stroke-width="1.600"/><rect x="16" y="16" width="9.5" height="9.5" rx="2" fill="#5a9a50" stroke="#3f7e38" stroke-width=".8"/><path d="M17.8 20.75 h5.9 M20.75 17.8 v5.9" stroke="#fff" stroke-width="2"/></svg>
<svg class="a" style="left:33px;top:415px" width="26" height="26" viewBox="0 0 26 26"><rect x="1.500" y="3.500" width="20" height="15" rx="6" fill="#6a93c6" stroke="#1f3f66" stroke-width="1.600"/><path d="M5 5 h4 v4 h-4z M13 5 h4 v4 h-4z M9 9 h4 v4 h-4z M5 13 h4 v4 h-4z M13 13 h4 v4 h-4z" fill="#1f3f66"/><rect x="16" y="16" width="9.5" height="9.5" rx="2" fill="#5a9a50" stroke="#3f7e38" stroke-width=".8"/><path d="M17.8 20.75 h5.9 M20.75 17.8 v5.9" stroke="#fff" stroke-width="2"/></svg>
<svg class="a" style="left:33px;top:448px" width="26" height="26" viewBox="0 0 26 26"><path d="M14 0 L6 13 H11 L3 24 L19 9 H13 L20 0z" fill="#5b84b4" stroke="#3a6aa0" stroke-width=".6"/><rect x="16" y="16" width="9.5" height="9.5" rx="2" fill="#5a9a50" stroke="#3f7e38" stroke-width=".8"/><path d="M17.8 20.75 h5.9 M20.75 17.8 v5.9" stroke="#fff" stroke-width="2"/></svg>
<svg class="a" style="left:33px;top:482px" width="26" height="26" viewBox="0 0 26 26"><ellipse cx="12.500" cy="11" rx="11.500" ry="9.500" fill="#a8c0e0" stroke="#6a90c0" stroke-width="1.400"/><path d="M5 6 q4 -3 7 -1 q1 3 -2 4 q-1 4 -5 2z M14 7 q5 -2 8 2 q0 4 -4 6 q-3 -2 -4 -8z M8 15 q3 0 3 3 q-3 1 -3 -3z" fill="#3a6aa0"/><path d="M12.500 1.500 v19 M1 11 h23" stroke="#e8eef8" stroke-width=".8"/><rect x="16" y="16" width="9.5" height="9.5" rx="2" fill="#5a9a50" stroke="#3f7e38" stroke-width=".8"/><path d="M17.8 20.75 h5.9 M20.75 17.8 v5.9" stroke="#fff" stroke-width="2"/></svg>
<svg class="a" style="left:33px;top:516px" width="26" height="26" viewBox="0 0 26 26"><ellipse cx="12.500" cy="11" rx="11.500" ry="9.500" fill="#4a78b0" stroke="#1a3050" stroke-width="2"/><ellipse cx="12.500" cy="11" rx="5" ry="9.500" fill="none" stroke="#e8eef8" stroke-width="1.300"/><path d="M1.500 11 h22 M3 6 h19 M3 16 h19 M12.500 1.500 v19" stroke="#e8eef8" stroke-width="1.300"/><rect x="16" y="16" width="9.5" height="9.5" rx="2" fill="#5a9a50" stroke="#3f7e38" stroke-width=".8"/><path d="M17.8 20.75 h5.9 M20.75 17.8 v5.9" stroke="#fff" stroke-width="2"/></svg>
<svg class="a" style="left:33px;top:550px" width="26" height="26" viewBox="0 0 26 26"><ellipse cx="12.500" cy="11" rx="11.500" ry="9.500" fill="#f4f7fc" stroke="#6a90c0" stroke-width="1.400"/><ellipse cx="12.500" cy="11" rx="5" ry="9.500" fill="none" stroke="#8aa8d0" stroke-width=".9"/><path d="M1.500 11 h22 M3 6 h19 M3 16 h19" stroke="#8aa8d0" stroke-width=".9"/><path d="M6 6 L10.500 17.500 L14.500 6 L19 6" fill="none" stroke="#1f2f44" stroke-width="1.300"/><g fill="#fff" stroke="#1f2f44" stroke-width=".9"><circle cx="6" cy="6" r="1.500"/><circle cx="10.500" cy="17.500" r="1.500"/><circle cx="14.500" cy="6" r="1.500"/><circle cx="19" cy="6" r="1.500"/></g><rect x="16" y="16" width="9.5" height="9.5" rx="2" fill="#5a9a50" stroke="#3f7e38" stroke-width=".8"/><path d="M17.8 20.75 h5.9 M20.75 17.8 v5.9" stroke="#fff" stroke-width="2"/></svg>
<svg class="a" style="left:33px;top:584px" width="26" height="26" viewBox="0 0 26 26"><path d="M8 2 Q15 2 15 8 Q15 15 5 18 L5 16 Q10 13 9 10 Q4 10 4 6 Q4 2 8 2z" fill="#4a78b0"/><rect x="16" y="16" width="9.5" height="9.5" rx="2" fill="#5a9a50" stroke="#3f7e38" stroke-width=".8"/><path d="M17.8 20.75 h5.9 M20.75 17.8 v5.9" stroke="#fff" stroke-width="2"/></svg>
<svg class="a" style="left:42px;top:635px" width="8" height="10" viewBox="0 0 8 10"><path d="M1 1 L4 4 L7 1 M1 5 L4 8 L7 5" fill="none" stroke="#000" stroke-width="1.400"/></svg>
<div class="gripx" style="left:25px;top:655px;width:42px"></div>
<svg class="a" style="left:36px;top:666px" width="26" height="26" viewBox="0 0 26 26"><path d="M12.500 1 V24 M1 12.500 H24" stroke="#222" stroke-width="1" shape-rendering="crispEdges"/><circle cx="12.500" cy="12.500" r="4" fill="none" stroke="#d82818" stroke-width="1.200" stroke-dasharray="2.200 1.500"/></svg>
<svg class="a" style="left:36.5px;top:696px" width="8" height="10" viewBox="0 0 8 10"><path d="M1 1 L4 4 L7 1 M1 5 L4 8 L7 5" fill="none" stroke="#000" stroke-width="1.400"/></svg>
<div class="gripx" style="left:76px;top:200px;width:114px"></div>
<div class="gripx" style="left:218px;top:200px;width:146px"></div>
<div class="hw" style="left:196.5px;top:195px;font-size:11px;color:#111;transform-origin:0 50%;transform:scaleX(0.645);">Слои</div>
<div class="a" style="left:73px;top:216px;width:293px;height:148px;box-sizing:border-box;background:#fff;border:1px solid #a0a0a0;border-top-color:#828282"></div>
<div class="a" style="left:113px;top:365px;width:71px;height:17px;box-sizing:border-box;border:1px solid #a8a8a8;border-top:none;border-radius:0 0 3px 3px;background:linear-gradient(#f2f2f2,#e0e0e0)"></div>
<div class="a" style="left:73px;top:364px;width:41px;height:21px;box-sizing:border-box;border:1px solid #a8a8a8;border-top:none;border-radius:0 0 3px 3px;background:#f6f6f6"></div>
<div class="hw" style="left:83.5px;top:364px;font-size:11px;color:#111;transform-origin:0 50%;transform:scaleX(0.774);">Слои</div>
<div class="hw" style="left:125.5px;top:363px;font-size:11px;color:#111;transform-origin:0 50%;transform:scaleX(0.722);">Обозреватель</div>
<div class="a" style="left:368px;top:366px;height:170px;width:2px;background:linear-gradient(#bcbcbc 0,#bcbcbc 1.6px,#fff 1.6px,#fff 2.8px,transparent 2.8px) 0 0/2px 5px repeat-y"></div>
<div class="gripx" style="left:168px;top:385px;width:92px;height:4px"></div>
<div class="gripx" style="left:76px;top:397px;width:88px"></div>
<div class="gripx" style="left:250px;top:397px;width:82px"></div>
<div class="hw" style="left:168.3px;top:393px;font-size:10.5px;color:#111;transform-origin:0 50%;transform:scaleX(0.692);">Кратчайший маршрут</div>
<div class="a" style="left:336px;top:393px;width:14px;height:14px;box-sizing:border-box;border:1px solid #8a8a8a;border-radius:3px;background:#fbfbfb"></div>
<svg class="a" style="left:336px;top:393px" width="14" height="14" viewBox="0 0 14 14"><rect x="6.500" y="3" width="4" height="4.500" fill="#fff" stroke="#000" stroke-width="1"/><rect x="6" y="2" width="5" height="1.800" fill="#000"/><rect x="3.500" y="6" width="5" height="4.500" fill="#fff" stroke="#000" stroke-width="1"/><rect x="3" y="5" width="6" height="1.800" fill="#000"/></svg>
<div class="a" style="left:351px;top:393px;width:14px;height:14px;box-sizing:border-box;border:1px solid #8a8a8a;border-radius:3px;background:#fbfbfb"></div>
<svg class="a" style="left:351px;top:393px" width="14" height="14" viewBox="0 0 14 14"><path d="M3.500 3.500 L10.500 10 M10.500 3.500 L3.500 10" stroke="#000" stroke-width="1.500"/></svg>
<div class="hw" style="left:80.6px;top:421px;font-size:10.5px;color:#111;transform-origin:0 50%;transform:scaleX(0.818);">Начальная точка</div>
<div class="inp" style="left:81px;top:449px;width:243px;height:20px"></div>
<div class="btn" style="left:331px;top:447px;width:26px;height:25px"></div><svg class="a" style="left:336px;top:451px" width="26" height="26" viewBox="0 0 26 26"><path d="M8 0.500 L9.700 6 H6.300z M8 15.500 L6.300 10 H9.700z M0.500 8 L6 6.300 V9.700z M15.500 8 L10 9.700 V6.300z" fill="#4a8ac8"/><circle cx="8" cy="8" r="2" fill="#e02818"/></svg>
<div class="hw" style="left:80.6px;top:480px;font-size:10.5px;color:#111;transform-origin:0 50%;transform:scaleX(0.824);">Конечная точка</div>
<div class="inp" style="left:81px;top:508px;width:243px;height:20px"></div>
<div class="btn" style="left:331px;top:506px;width:26px;height:25px"></div><svg class="a" style="left:336px;top:510px" width="26" height="26" viewBox="0 0 26 26"><path d="M8 0.500 L9.700 6 H6.300z M8 15.500 L6.300 10 H9.700z M0.500 8 L6 6.300 V9.700z M15.500 8 L10 9.700 V6.300z" fill="#4a8ac8"/><circle cx="8" cy="8" r="2" fill="#e02818"/></svg>
<div class="hw" style="left:80.6px;top:539px;font-size:11px;color:#111;transform-origin:0 50%;transform:scaleX(0.829);">Критерий</div>
<div class="btn" style="left:222px;top:539px;width:135px;height:20px;border-radius:2px"></div>
<div class="a" style="left:340px;top:540px;width:1px;height:18px;background:#b0b0b0"></div>
<div class="a" style="left:344px;top:546px;width:0;height:0;border-top:4px solid #000;border-left:4px solid transparent;border-right:4px solid transparent"></div>
<div class="hw" style="left:227.6px;top:539px;font-size:10.5px;color:#111;transform-origin:0 50%;transform:scaleX(0.770);">Расстояние</div>
<div class="hw" style="left:80.6px;top:568px;font-size:10.5px;color:#111;transform-origin:0 50%;transform:scaleX(0.770);">Расстояние</div>
<div class="inp" style="left:127px;top:568px;width:230px;height:20px"></div>
<div class="hw" style="left:80.6px;top:597px;font-size:11px;color:#111;transform-origin:0 50%;transform:scaleX(0.918);">Время</div>
<div class="inp" style="left:113px;top:597px;width:244px;height:20px"></div>
<div class="btn" style="left:81px;top:627px;width:85px;height:32px"></div>
<div class="hw" style="left:98.7px;top:633px;font-size:10.5px;color:#111;transform-origin:0 50%;transform:scaleX(0.828);">Рассчитать</div>
<div class="btn" style="left:176px;top:627px;width:86px;height:32px"></div>
<div class="hw" style="left:202px;top:633px;font-size:10.5px;color:#111;transform-origin:0 50%;transform:scaleX(0.815);">Экспорт</div>
<div class="btn" style="left:272px;top:627px;width:85px;height:32px"></div>
<div class="hw" style="left:295.5px;top:633px;font-size:10.5px;color:#111;transform-origin:0 50%;transform:scaleX(0.784);">Очистить</div>
<div class="btn" style="left:81px;top:668px;width:276px;height:32px"></div>
<svg class="a" style="left:193px;top:675px" width="26" height="26" viewBox="0 0 26 26"><circle cx="8" cy="8" r="5.500" fill="none" stroke="#e84438" stroke-width="3.400"/><path d="M2 2 L6 6 M14 2 L10 6 M2 14 L6 10 M14 14 L10 10" stroke="#fff" stroke-width="3"/><circle cx="8" cy="8" r="7.200" fill="none" stroke="#c02820" stroke-width=".5"/></svg>
<div class="hw" style="left:213.8px;top:674px;font-size:11px;color:#111;transform-origin:0 50%;transform:scaleX(0.770);">Справка</div>
<div class="a" style="left:372px;top:195px;width:840px;height:514px;box-sizing:border-box;background:#fff;border:2px solid #3f98f0;border-top-color:#2f8ae6;border-radius:3px"></div>
<div class="sb" style="left:474px;width:23px"></div><svg class="a" style="left:477px;top:715px" width="26" height="26" viewBox="0 0 26 26"><circle cx="8" cy="7" r="5" fill="none" stroke="#222" stroke-width="2"/><path d="M5 11 L14 3" stroke="#222" stroke-width="1.600"/><path d="M10 10 L15 15 M15 10 L10 15" stroke="#222" stroke-width="1.500"/></svg>
<div class="sb" style="left:499px;width:59px"></div>
<div class="hw" style="left:504px;top:714px;font-size:10.5px;color:#111;transform-origin:0 50%;transform:scaleX(0.782);">Координаты:</div>
<div class="sb" style="left:560px;width:303px;background:#fff"></div>
<div class="nar" style="left:681.7px;top:717px;font-size:13px;line-height:15px;color:#000;transform:scaleX(0.822);">-1.400,1.000</div>
<div class="sb" style="left:866px;width:52px"></div>
<div class="hw" style="left:871.3px;top:714px;font-size:10.5px;color:#111;transform-origin:0 50%;transform:scaleX(0.895);">Масштаб</div>
<div class="sb" style="left:920px;width:84px;background:#fff"></div>
<div class="nar" style="left:925px;top:717px;font-size:13px;line-height:15px;color:#000;transform:scaleX(0.856);">1:1639059</div>
<div class="a" style="left:986px;top:716px;width:1px;height:14px;background:#a8a8a8"></div><div class="a" style="left:990px;top:721px;width:0;height:0;border-top:4px solid #000;border-left:4px solid transparent;border-right:4px solid transparent"></div>
<div class="sb" style="left:1008px;width:23px"></div><svg class="a" style="left:1010px;top:715px" width="26" height="26" viewBox="0 0 26 26"><circle cx="7" cy="8" r="5" fill="none" stroke="#e03030" stroke-width="1.800"/><path d="M3.500 4.500 L10.500 11.500" stroke="#e03030" stroke-width="1.800"/><path d="M11 12 L19 2 L20 6z" fill="#999"/></svg>
<div class="sb" style="left:1033px;top:711px;width:65px;height:20px"></div>
<div class="a" style="left:1035px;top:718px;font:bold 13px/14px 'DejaVu Sans',sans-serif">✖</div>
<div class="hw" style="left:1052.3px;top:713px;font-size:10.5px;color:#111;transform-origin:0 50%;transform:scaleX(0.794);">Отрисовка</div>
<div class="sb" style="left:1101px;width:66px"></div>
<div class="nar" style="left:1106px;top:717px;font-size:13px;line-height:15px;color:#9a9a9a;transform:scaleX(0.816);">EPSG:4326</div>
<div class="sb" style="left:1169px;width:23px"></div><svg class="a" style="left:1172px;top:716px" width="26" height="26" viewBox="0 0 26 26"><circle cx="9" cy="9" r="7.500" fill="#c8c8c8" stroke="#999" stroke-width="1.500"/><ellipse cx="9" cy="9" rx="3.500" ry="7.500" fill="none" stroke="#f0f0f0" stroke-width="1.200"/><path d="M1.500 9 h15 M3 5 h12 M3 13 h12" stroke="#f0f0f0" stroke-width="1.200"/></svg>
<div class="a" id="dd" style="left:325px;top:75px;width:160px;height:239px;box-sizing:border-box;background:#f7f7f7;border:1px solid #979797;box-shadow:2px 2px 3px rgba(0,0,0,.45)"></div>
<div class="hw" style="left:350px;top:75px;font-size:11px;color:#111;transform-origin:0 50%;transform:scaleX(0.778);">Калькулятор растров...</div>
<div class="hw" style="left:350px;top:98px;font-size:11px;color:#111;transform-origin:0 50%;transform:scaleX(0.761);">Зональная статистика</div>
<div class="arr" style="top:103.7px"></div>
<div class="hw" style="left:350px;top:117px;font-size:11px;color:#111;transform-origin:0 50%;transform:scaleX(0.759);">Интерполяция</div>
<div class="arr" style="top:122.7px"></div>
<div class="hw" style="left:350px;top:136px;font-size:11px;color:#111;transform-origin:0 50%;transform:scaleX(0.805);">Привязка растров</div>
<div class="arr" style="top:141.7px"></div>
<div class="hw" style="left:350px;top:155px;font-size:11px;color:#111;transform-origin:0 50%;transform:scaleX(0.885);">Теплокарты</div>
<div class="arr" style="top:160.7px"></div>
<div class="hw" style="left:350px;top:177px;font-size:11px;color:#111;transform-origin:0 50%;transform:scaleX(0.795);">Морфометрический анализ</div>
<div class="arr" style="top:182.7px"></div>
<div class="hw" style="left:350px;top:198px;font-size:11px;color:#111;transform-origin:0 50%;transform:scaleX(0.792);">Проекции</div>
<div class="arr" style="top:204.8px"></div>
<div class="hw" style="left:350px;top:217px;font-size:11px;color:#111;transform-origin:0 50%;transform:scaleX(0.752);">Преобразование</div>
<div class="arr" style="top:223.8px"></div>
<div class="hw" style="left:350px;top:236px;font-size:11px;color:#111;transform-origin:0 50%;transform:scaleX(0.796);">Извлечение</div>
<div class="arr" style="top:242.8px"></div>
<div class="hw" style="left:350px;top:255px;font-size:11px;color:#111;transform-origin:0 50%;transform:scaleX(0.930);">Анализ</div>
<div class="arr" style="top:261.8px"></div>
<div class="hw" style="left:350px;top:274px;font-size:11px;color:#111;transform-origin:0 50%;transform:scaleX(0.802);">Прочее</div>
<div class="arr" style="top:280.8px"></div>
<div class="hw" style="left:350px;top:293px;font-size:11px;color:#111;transform-origin:0 50%;transform:scaleX(0.816);">Параметры</div>
<div class="nar" style="left:399.6px;top:292px;font-size:13px;line-height:15px;color:#000;transform:scaleX(0.839);">GDAL Tools</div>
<div class="msep" style="top:97px"></div>
<div class="msep" style="top:175px"></div>
<div class="msep" style="top:198px"></div>
<svg class="a" style="left:328px;top:78px" width="18" height="18" viewBox="0 0 18 18"><rect x="1" y="1" width="8" height="8" fill="#5b84b4"/><path d="M1 1 h2.700 v2.700 h-2.700z M6.300 1 h2.700 v2.700 h-2.700z M3.700 3.700 h2.600 v2.600 h-2.600z" fill="#1f3f66"/><rect x="5.500" y="6.500" width="10" height="9" fill="#f4f4f4" stroke="#777"/><path d="M6 9.500 h9 M6 12.500 h9" stroke="#777" stroke-width=".8"/><circle cx="9" cy="9.500" r="1.200" fill="#d03020"/><circle cx="12" cy="9.500" r="1.200" fill="#d03020"/><circle cx="8" cy="12.500" r="1.200" fill="#3a9a3a"/><circle cx="13" cy="12.500" r="1.200" fill="#3a9a3a"/></svg>
<svg class="a" style="left:328px;top:179px" width="18" height="18" viewBox="0 0 18 18"><rect x="0" y="0" width="16" height="17" fill="#b4d4ee"/><path d="M2 15 Q1 6 8 3 Q14 0 15 4 Q13 10 9 13 Q5 16 2 15z" fill="#8cb83c" stroke="#5a8a20" stroke-width=".8"/><path d="M4 13 Q4 8 9 5 Q12 4 12 6 Q10 10 4 13z" fill="#e8907c"/></svg>
<div class="a" id="tb" style="left:0;top:728px;width:1366px;height:40px;background:linear-gradient(#2a4a84 0,#1a3870 3px,#0e2858 10px,#0a2250 20px,#091e4a 40px)"></div>
<div class="a" style="left:0;top:728px;width:1366px;height:40px;background:linear-gradient(#6a90cc 0,#4a78bc 3px,#2e5aa0 9px,#1a428a 16px,#0e3070 24px,#0b2a64 40px);-webkit-mask-image:linear-gradient(90deg,#000 0,#000 1190px,transparent 1240px);mask-image:linear-gradient(90deg,#000 0,#000 1190px,transparent 1240px)"></div>
<div class="a" style="left:0;top:728px;width:1366px;height:1px;background:#1a2a50"></div>
<svg class="a" style="left:0;top:728px" width="440" height="40" viewBox="0 0 440 40"><defs><radialGradient id="orb" cx=".5" cy=".3" r=".75"><stop offset="0" stop-color="#7fb0e8"/><stop offset=".45" stop-color="#2f66b4"/><stop offset=".8" stop-color="#14407e"/><stop offset="1" stop-color="#2a8ad0"/></radialGradient><linearGradient id="mg" x1="0" y1="0" x2="0" y2="1"><stop offset="0" stop-color="#86a6b8"/><stop offset="1" stop-color="#44647a"/></linearGradient></defs><rect x="308.500" y="1.500" width="57" height="38" rx="3" fill="rgba(120,160,220,.22)" stroke="rgba(200,220,250,.5)"/><rect x="370.500" y="1.500" width="57" height="38" rx="3" fill="rgba(190,210,240,.5)" stroke="rgba(230,240,255,.8)"/><circle cx="27.500" cy="19.500" r="18.200" fill="url(#orb)" stroke="#8ab4e4" stroke-width="1.300"/><path d="M18 11.500 q4.500 -2.500 8.500 -.5 l-1.500 7 q-4 -2 -8.500 .5z" fill="#e8602a"/><path d="M28 11.500 q4 2 8.500 -.5 l-1.500 7 q-4.500 2.500 -8.500 .5z" fill="#8cc63c"/><path d="M16 20.500 q4.500 -2.500 8.500 -.5 l-1.500 7 q-4 -2 -8.500 .5z" fill="#3aa4e8"/><path d="M26 20.500 q4 2 8.500 -.5 l-1.500 7 q-4.500 2.500 -8.500 .5z" fill="#f8c428"/><path d="M75 12 Q75 7 80 7 H98 Q104 8 104 15 V35 H82 Q75 34 75 27z" fill="#f4f6ec" stroke="#6e8a1e" stroke-width="3"/><path d="M84 33.500 Q84 17 102.500 15 V33.500z" fill="#7a9a28"/><path d="M87.500 33.500 Q89 22 102.500 20.500 M91.500 33.500 Q93 26.500 102.500 25.500 M96 33.500 Q97 30.500 102.500 30" stroke="#f4f6ec" stroke-width="1.800" fill="none"/><circle cx="82.500" cy="6.500" r="3" fill="#1c1c1c"/><path d="M78 10 L82.500 13 L87 10 L85 27 H80.500z" fill="#3c3c3c"/><path d="M137 9 Q137 6 140 6 H158 Q165 7 165 14 V34 H144 Q137 33 137 26z" fill="#e4e4e4" stroke="#d87a28" stroke-width="4"/><path d="M141 10 H158 Q161 11 161 15 V30 H145 Q141 29 141 26z" fill="#f6f6f6" stroke="#a8a8a8" stroke-width=".8"/><path d="M145 30 Q146 17 160.500 15.500 V30z" fill="#e07828"/><path d="M148.500 30 Q150 21.500 160.500 20.500 M152 30 Q153.500 25.500 160.500 25" stroke="#f6f6f6" stroke-width="1.600" fill="none"/><path d="M220 26 L228.500 35" stroke="#e8e8e8" stroke-width="5" stroke-linecap="round"/><path d="M221 27 L228.500 35" stroke="#c81414" stroke-width="2"/><circle cx="212" cy="17.500" r="10" fill="#2244d8" stroke="#0c0c0c" stroke-width="3.200"/><circle cx="212" cy="17.500" r="11.800" fill="none" stroke="#e8e8e8" stroke-width="1.200" stroke-dasharray="2.500 2"/><path d="M205 13 q3 -3 6 -1 v5 q-3 2 -5 0z M214 11 q4 1 5 5 l-2 5 q-4 -1 -3 -10z M207 21 q3 -1 5 2 l-2 3 q-3 -1 -3 -5z" fill="#2cc43c"/><text x="259" y="36.500" font-family="Liberation Sans,sans-serif" font-weight="bold" font-size="37" fill="url(#mg)" stroke="#2c4456" stroke-width="1" textLength="34" lengthAdjust="spacingAndGlyphs">M</text><ellipse cx="337" cy="20" rx="14" ry="16" fill="#d81820" stroke="#a00c10"/><ellipse cx="337" cy="20" rx="5.500" ry="11.500" fill="#34589c"/><path d="M326 12 Q330 5 338 5 Q344 5 347 9" fill="none" stroke="#f06a60" stroke-width="1.500"/><rect x="393" y="16" width="24" height="22" fill="#5a84c0" stroke="#2c4c80"/><text x="398" y="36" font-family="Liberation Sans,sans-serif" font-size="22" fill="#14244a">x</text><circle cx="391" cy="15.500" r="8.500" fill="none" stroke="#d4d418" stroke-width="3.600"/><path d="M394 22 L401 32" stroke="#d4d418" stroke-width="3.400"/><path d="M381 28 L404 6" stroke="#48a828" stroke-width="2.200"/><path d="M407 3 l-8 1.500 l6.500 6.500z" fill="#48a828"/></svg><svg class="a" style="left:1200px;top:736px" width="80" height="24" viewBox="0 0 80 24"><rect x="4.500" y="6.500" width="9" height="13" rx="1.500" fill="none" stroke="#fff" stroke-width="1.600"/><path d="M7 6 v-3 M11 6 v-3" stroke="#fff" stroke-width="1.600"/><path d="M13 10 h5 v8 h-4" fill="none" stroke="#fff" stroke-width="1.600"/><path d="M7 10 h4 v4 h-4z" fill="#fff"/><path d="M30 19 v-2 M33.500 19 v-4 M37 19 v-7 M40.500 19 v-10 M44 19 v-13" stroke="#fff" stroke-width="2"/><path d="M56 10 h3 l4 -4 v13 l-4 -4 h-3z" fill="#fff"/><path d="M66 8 q3 4.500 0 9" fill="none" stroke="#fff" stroke-width="1.200"/></svg>
<div class="a" style="left:1092px;top:740px;color:#fff;font-size:12px;white-space:nowrap">4 курс</div>
<svg class="a" style="left:1133px;top:734px" width="10" height="8" viewBox="0 0 10 8"><path d="M1 1 L4 4 L1 7 M5 1 L8 4 L5 7" fill="none" stroke="#fff" stroke-width="1.300"/></svg>
<div class="a" style="left:1153px;top:739px;color:#fff;font-size:12px">UK</div>
<div class="a" style="left:1183px;top:745px;width:0;height:0;border-bottom:5px solid #fff;border-left:4px solid transparent;border-right:4px solid transparent"></div>
<div class="nar" style="left:1300px;top:734px;font-size:12px;line-height:14px;color:#fff;transform:scaleX(0.892);">11:51</div>
<div class="nar" style="left:1285.6px;top:751px;font-size:12px;line-height:14px;color:#fff;transform:scaleX(0.899);">19.10.2013</div>
<div class="a" style="left:1352px;top:729px;width:14px;height:39px;box-sizing:border-box;border-left:1px solid #6a86b8;border-top:1px solid #5a76a8;background:linear-gradient(#3a5a94,#1c3868 60%,#14305c);opacity:.9"></div>
</body></html>
